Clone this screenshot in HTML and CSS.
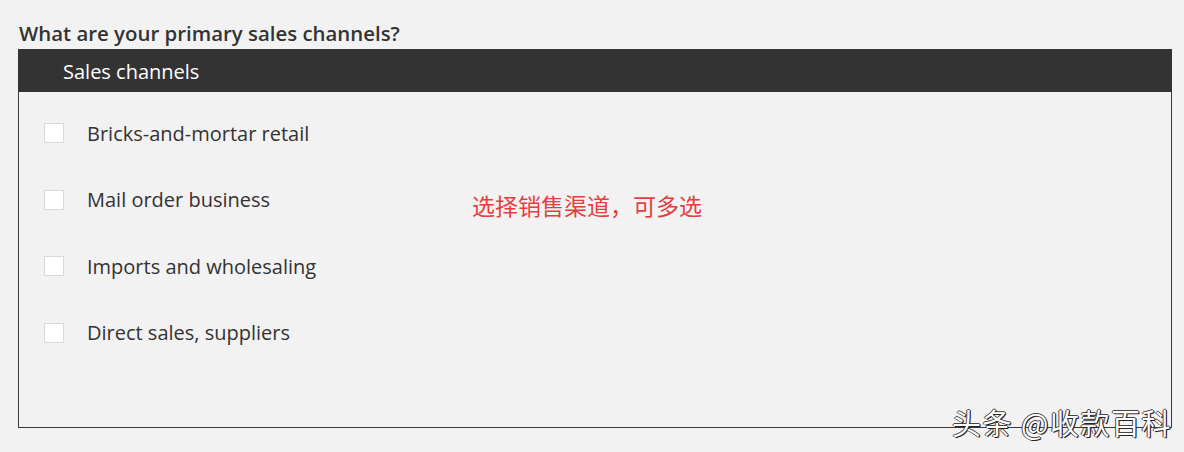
FILE: index.html
```html
<!DOCTYPE html>
<html>
<head>
<meta charset="utf-8">
<link rel="stylesheet" href="styles.css">
</head>
<body>
<div class="page">
  <h1 class="question">What are your primary sales channels?</h1>
  <div class="panel">
    <div class="panel-head">Sales channels</div>
    <div class="panel-body">
      <ul class="options">
        <li class="option"><span class="box"></span><span class="label">Bricks-and-mortar retail</span></li>
        <li class="option"><span class="box"></span><span class="label">Mail order business</span></li>
        <li class="option"><span class="box"></span><span class="label">Imports and wholesaling</span></li>
        <li class="option"><span class="box"></span><span class="label">Direct sales, suppliers</span></li>
      </ul>
      <div class="note">选择销售渠道，可多选</div>
    </div>
  </div>
  <div class="watermark">头条 @收款百科</div>
</div>
</body>
</html>
```
FILE: styles.css
```css
html, body {
  margin: 0;
  padding: 0;
  background: #f2f2f2;
}
.page {
  position: relative;
  width: 1184px;
  height: 452px;
  padding: 19px 12px 0 18px;
  box-sizing: border-box;
  font-family: "Open Sans", "Noto Sans", sans-serif;
  color: #333;
}
.question {
  margin: 0 0 0 1px;
  font-size: 20.4px;
  font-weight: 600;
  line-height: 28px;
  color: #333;
  height: 30px;
}
.panel {
  width: 1154px;
  box-sizing: border-box;
}
.panel-head {
  height: 43px;
  box-sizing: border-box;
  background: #333333;
  color: #fff;
  font-size: 20px;
  line-height: 43px;
  padding: 1px 0 0 45px;
}
.panel-body {
  height: 336px;
  border: 1px solid #3a3a3a;
  border-top: none;
  box-sizing: border-box;
  display: flex;
  padding: 21px 0 0 25px;
}
.options {
  list-style: none;
  margin: 0;
  padding: 0;
  width: 404px;
  display: flex;
  flex-direction: column;
  gap: 26.5px;
}
.option {
  display: flex;
  align-items: center;
  height: 40px;
  font-size: 20px;
  color: #333;
}
.box {
  width: 18px;
  height: 18px;
  border: 1px solid #d9d9d9;
  background: #fff;
  margin-right: 23px;
  flex: none;
}
.note {
  margin-top: 77px;
  margin-left: 24px;
  font-family: "Noto Sans CJK SC", sans-serif;
  font-size: 23px;
  line-height: 30px;
  color: #e53e3e;
  height: 30px;
}
.watermark {
  position: absolute;
  left: 952px;
  top: 404px;
  font-family: "Noto Sans CJK SC", sans-serif;
  font-size: 29px;
  line-height: 36px;
  color: #fff;
  letter-spacing: 1.5px;
  text-shadow: 1px 1px 0 #222, -1px 0 0 #444, 0 -1px 0 #444, 1px 0 0 #222;
}
```
